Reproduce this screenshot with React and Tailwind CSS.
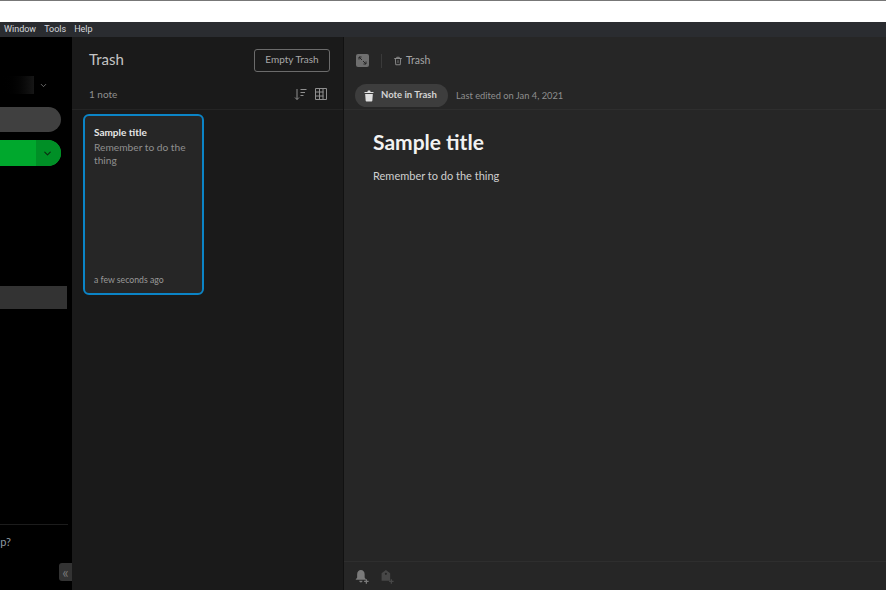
import React from "react";
import { ChevronDown } from "lucide-react";

function TrashIcon({ className }) {
  return (
    <svg viewBox="0 0 12 14" className={className} fill="currentColor">
      <path d="M4.2 1.6C4.2.8 4.8.4 5.4.4h1.2c.6 0 1.2.4 1.2 1.2v.5h3c.4 0 .7.3.7.7v.5H.5v-.5c0-.4.3-.7.7-.7h3z" />
      <path d="M1.4 4.600h9.200l-.6 8c0 .6-.5 1-1 1H3c-.5 0-1-.4-1-1z" />
    </svg>
  );
}

function TrashOutline({ className }) {
  return (
    <svg viewBox="0 0 12 12" className={className} fill="none" stroke="currentColor" strokeWidth="1">
      <path d="M1.500 3h9M4.500 3V1.500h3V3M2.800 3l.5 7.500h5.400l.5-7.500" />
      <path d="M6 5v3.500" strokeWidth="0.8" />
    </svg>
  );
}

export default function App() {
  return (
    <div className="flex h-[590px] w-[886px] flex-col overflow-hidden bg-white font-['Lato',sans-serif]">
      <div className="h-[22px] shrink-0 border-t border-[#777]" />
      <div className="flex h-[15px] shrink-0 items-center gap-[8px] bg-[#2a2c30] pl-[4px] font-['Roboto',sans-serif] text-[9px] text-[#d5d8dc]">
        <span>Window</span>
        <span>Tools</span>
        <span>Help</span>
      </div>

      <div className="flex min-h-0 flex-1">
        {/* sidebar, cut off by the left edge */}
        <div className="relative flex w-[72px] shrink-0 flex-col bg-black">
          <div className="mt-[39px] flex h-[18px] items-center">
            <div className="h-[18px] w-[34px] bg-gradient-to-r from-black to-[#161616]" />
            <ChevronDown size={9} strokeWidth={2} className="ml-[5px] text-[#8a8a8a]" />
          </div>
          <div className="mt-[13px] h-[25px] w-[61px] rounded-r-full bg-[#404040]" />
          <div className="mt-[8px] flex h-[26px] w-[61px] overflow-hidden rounded-r-full bg-[#00a82d]">
            <div className="w-[36px]" />
            <div className="flex flex-1 items-center justify-center bg-[#008f26] pr-[2px]">
              <ChevronDown size={11} strokeWidth={2.5} className="text-[#0b2e12]" />
            </div>
          </div>
          <div className="mt-[120px] h-[23px] w-[67px] bg-[#333333]" />
          <div className="mt-[215px] h-px w-[68px] bg-[#1c1c1c]" />
          <div className="mt-[10px] w-[11px] text-right text-[11px] leading-[14px] text-[#8f9aa3]">p?</div>
          <div className="absolute bottom-[9px] right-0 flex h-[18px] w-[13px] items-center justify-center rounded-l-[3px] bg-[#333333] text-[15px] leading-none text-[#777]">
            «
          </div>
        </div>

        {/* note list */}
        <div className="flex w-[272px] shrink-0 flex-col bg-[#1a1a1a]">
          <div className="flex h-[73px] shrink-0 flex-col border-b border-[#242424] px-[17px]">
            <div className="mt-[11px] flex items-center justify-between">
              <span className="mb-[2px] text-[15px] leading-[22px] text-[#c4c4c4]">Trash</span>
              <button className="-mr-[3px] h-[23px] w-[76px] rounded-[3px] border border-[#6b6b6b] pb-[2px] text-[10px] text-[#a8a8a8]">
                Empty Trash
              </button>
            </div>
            <div className="mt-[15px] flex h-[14px] items-center justify-between">
              <span className="text-[10px] text-[#8f8f8f]">1 note</span>
              <div className="flex items-center gap-[8px] text-[#8f8f8f]">
                <svg viewBox="0 0 13 13" className="h-[13px] w-[13px]" fill="none" stroke="currentColor" strokeWidth="1">
                  <path d="M3 1v10.500M1 9.500l2 2 2-2" />
                  <path d="M6.500 1.500h6M6.500 4.500h4.500M6.500 7.500h3" />
                </svg>
                <svg viewBox="0 0 12 12" className="h-[12px] w-[12px]" fill="none" stroke="currentColor" strokeWidth="1">
                  <path d="M.5.5h11v11H.5zM4.500.5v11M8 .5v11M.5 4h8M.5 8h8" />
                </svg>
              </div>
            </div>
          </div>
          <div className="px-[5px] pt-[4px] pl-[11px]">
            <div className="flex h-[181px] w-[121px] flex-col rounded-[6px] border-2 border-[#0b84c6] bg-[#262626] px-[9px] pt-[9px] pb-[7px]">
              <div className="text-[10px] font-bold leading-[15px] text-[#e6e6e6]">Sample title</div>
              <div className="mt-[1px] text-[10.2px] leading-[13px] text-[#8f8f8f]">Remember to do the thing</div>
              <div className="mt-auto text-[8.7px] leading-[12px] text-[#999999]">a few seconds ago</div>
            </div>
          </div>
        </div>

        {/* note view */}
        <div className="-ml-px flex min-w-0 flex-1 flex-col border-l border-[#111] bg-[#262626]">
          <div className="flex h-[73px] shrink-0 flex-col border-b border-[#2e2e2e] pl-[12px]">
            <div className="mt-[16px] flex h-[15px] items-center">
              <div className="flex h-[13px] w-[13px] items-center justify-center rounded-[2px] bg-[#6e6e6e]">
                <svg viewBox="0 0 13 13" className="h-[13px] w-[13px]" fill="none" stroke="#262626" strokeWidth="1">
                  <path d="M3 3l3 3M3 3h2.500M3 3v2.500M10 10L7 7M10 10H7.500M10 10V7.500" />
                </svg>
              </div>
              <div className="ml-[12px] h-[14px] w-px bg-[#3a3a3a]" />
              <TrashOutline className="ml-[11px] h-[10px] w-[10px] text-[#999]" />
              <span className="ml-[3px] text-[10.5px] text-[#a5a5a5]">Trash</span>
            </div>
            <div className="-ml-px mt-[16px] flex items-center">
              <div className="flex h-[23px] w-[93px] items-center rounded-full bg-[#3d3d3d] pl-[9px]">
                <TrashIcon className="h-[12px] w-[10px] text-[#e0e0e0]" />
                <span className="ml-[7px] text-[9.5px] font-bold text-[#d4d4d4]">Note in Trash</span>
              </div>
              <span className="ml-[8px] text-[9.3px] text-[#8f8f8f]">Last edited on Jan 4, 2021</span>
            </div>
          </div>
          <div className="flex-1 pl-[29px] pt-[17px]">
            <div className="text-[21px] font-bold leading-[30px] text-[#f2f2f2]">Sample title</div>
            <div className="mt-[11px] text-[11px] leading-[16px] text-[#cfcfcf]">Remember to do the thing</div>
          </div>
          <div className="flex h-[29px] shrink-0 items-center gap-[10px] border-t border-[#2e2e2e] pl-[11px]">
            <svg viewBox="0 0 14 14" className="h-[15px] w-[15px]" fill="#7a7a7a">
              <path d="M5.500 1c2 0 3.500 1.500 3.500 4v3l1.500 2H.5L2 8V5c0-2.500 1.500-4 3.500-4zM4 11h3c0 1-.7 1.500-1.500 1.500S4 12 4 11z" />
              <path d="M10 9.500h1.200v1.500h1.500v1.200h-1.500v1.500H10v-1.500H8.500V11H10z" />
            </svg>
            <svg viewBox="0 0 14 14" className="h-[15px] w-[15px]" fill="#474747">
              <path d="M5.500 1l4 3v7h-8V4zM5.500 3.500a1 1 0 100 2 1 1 0 000-2z" />
              <path d="M10 9.500h1.200v1.500h1.500v1.200h-1.500v1.500H10v-1.500H8.500V11H10z" />
            </svg>
          </div>
        </div>
      </div>
    </div>
  );
}
